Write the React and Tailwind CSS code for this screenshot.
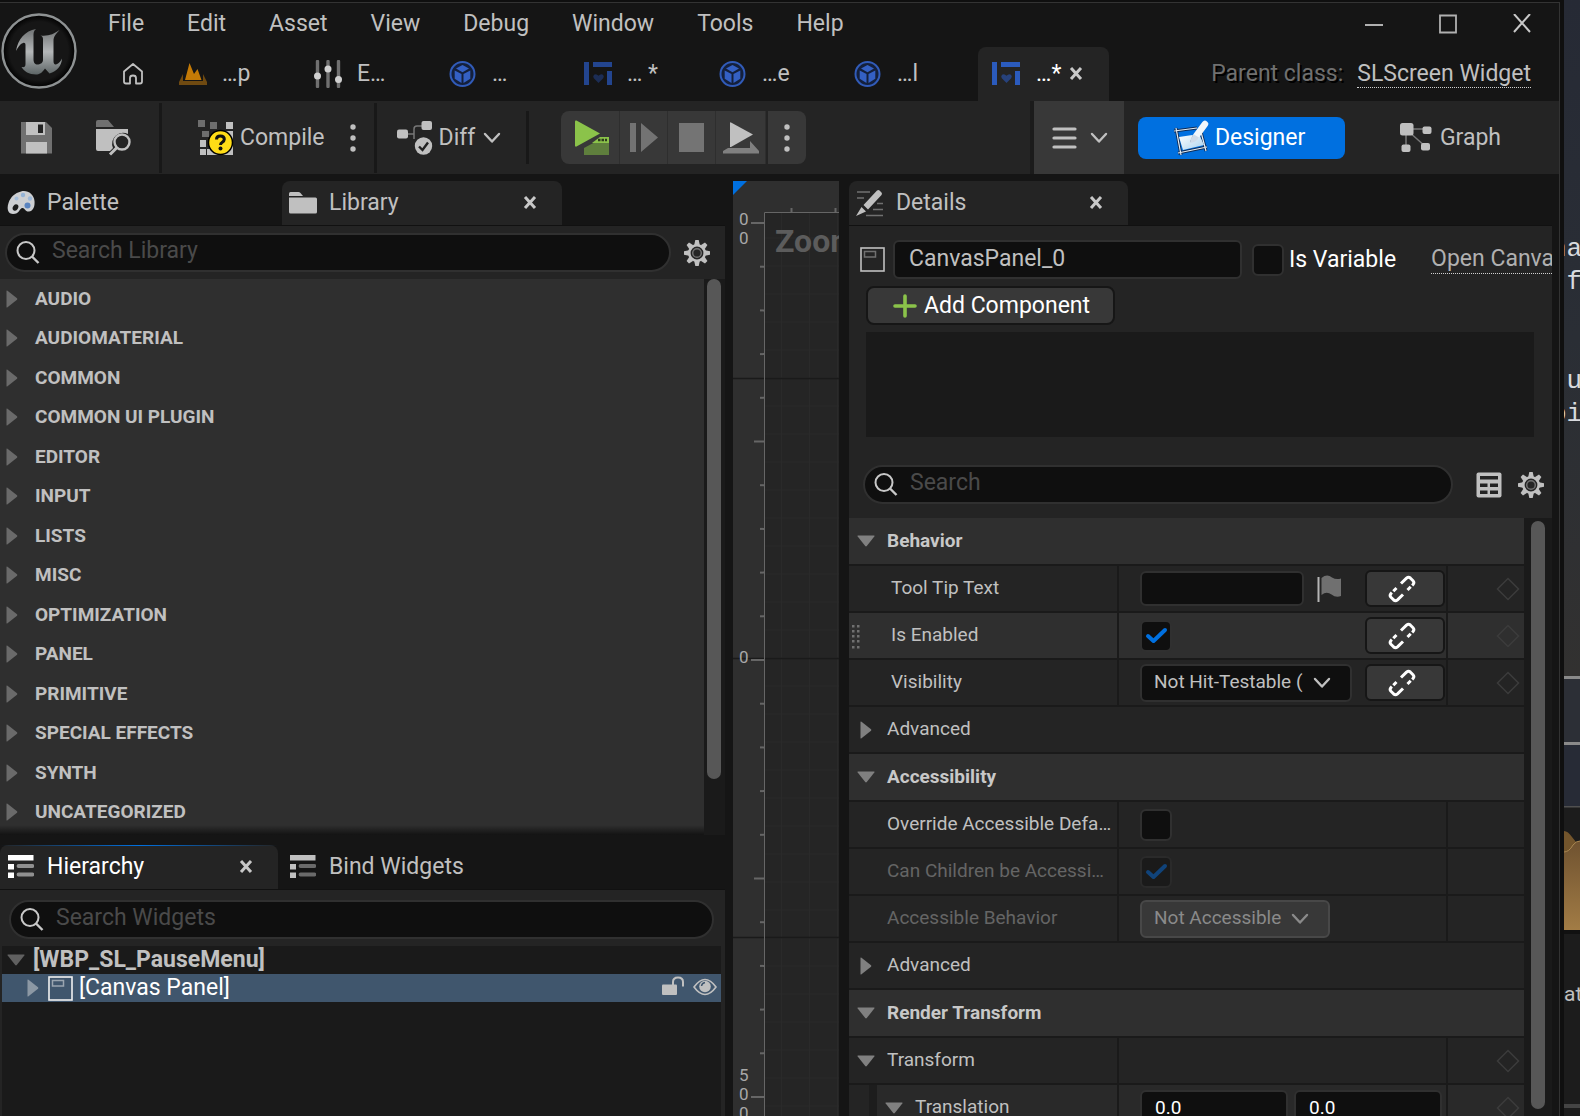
import React, { useState } from 'react'
import clsx from 'clsx'

const MENUS = ['File', 'Edit', 'Asset', 'View', 'Debug', 'Window', 'Tools', 'Help']

const LIBRARY = [
  'AUDIO', 'AUDIOMATERIAL', 'COMMON', 'COMMON UI PLUGIN', 'EDITOR', 'INPUT', 'LISTS',
  'MISC', 'OPTIMIZATION', 'PANEL', 'PRIMITIVE', 'SPECIAL EFFECTS', 'SYNTH', 'UNCATEGORIZED',
]

/* ---------- icons ---------- */

function UnrealLogo() {
  return (
    <svg viewBox="0 0 76 76" className="size-[76px]" aria-label="Unreal Engine">
      <defs>
        <linearGradient id="logoFill" x1="0" y1="0" x2="0" y2="1">
          <stop offset="0" stopColor="#6f7273" />
          <stop offset="0.5" stopColor="#b4b7b8" />
          <stop offset="1" stopColor="#5d6566" />
        </linearGradient>
        <radialGradient id="logoBg">
          <stop offset="0.8" stopColor="#161616" />
          <stop offset="1" stopColor="#000" />
        </radialGradient>
      </defs>
      <circle cx="38" cy="38" r="36.500" fill="url(#logoBg)" stroke="#8e9293" strokeWidth="2.400" />
      <path
        fill="url(#logoFill)"
        d="M15 38C17 26 24 18 35 16C32.500 18 32.500 20 32.500 23V46C32.500 50 34 51.500 36.500 51.500C39 51.500 42 50 42 47V26C42 24 41 23 39.500 22.500C47 23.500 53 21 58.500 17C55 21 52.500 23 52.500 28V48C52.500 50.500 53.500 52 55 51.500C58 50.500 60 48 61 45.500C60.500 53 56 58 48.500 60.500L44 55.500C41 60 38 61.500 35 61.500C28 61.500 23 58.500 20.500 54C23 54.500 24.500 54 24.500 51V32C24.500 30 23.500 29.500 22 30C19 31 17 34 15 38Z"
      />
    </svg>
  )
}

function HomeIcon() {
  return (
    <svg viewBox="0 0 22 24" className="w-[22px] h-6" fill="none" stroke="#c0c0c0" strokeWidth="1.800" strokeLinejoin="round">
      <path d="M2 9.500L11 2L20 9.500V19.500Q20 21.500 18 21.500H14V16Q14 13.500 11 13.500T8 16V21.500H4Q2 21.500 2 19.500Z" />
    </svg>
  )
}

function LevelIcon() {
  return (
    <svg viewBox="0 0 28 24" className="w-7 h-6">
      <path d="M6 18L10.500 1L15 12L18.500 7L22.500 18Z" fill="#c47a06" />
      <path d="M0 23V20L4 12V19H24V12L28 20V23Z" fill="#6f4a11" />
    </svg>
  )
}

function SlidersIcon() {
  return (
    <svg viewBox="0 0 28 28" className="size-7">
      <path d="M3.500 1.500V26.500M14 1.500V26.500M24.500 1.500V26.500" stroke="#707070" strokeWidth="3.400" strokeLinecap="round" />
      <g fill="#d0d0d0">
        <circle cx="3.500" cy="16" r="3.500" />
        <circle cx="14" cy="9" r="3.500" />
        <circle cx="24.500" cy="19.500" r="3.500" />
      </g>
    </svg>
  )
}

function BlueprintIcon() {
  return (
    <svg viewBox="0 0 28 28" className="size-7">
      <circle cx="13.500" cy="14" r="12" fill="#14203c" stroke="#315bb8" strokeWidth="2" />
      <g fill="#3460c4">
        <path d="M13.500 5L20 8.500L13.500 12.200L7 8.500Z" />
        <path d="M5.700 10.500L12.500 14V23L5.700 18.800Z" />
        <path d="M21.300 10.500L14.500 14V23L21.300 18.800Z" />
      </g>
    </svg>
  )
}

function WidgetIcon({ active }) {
  return (
    <svg viewBox="0 0 28 24" className="w-7 h-6">
      <path d="M0 0H5V23H0ZM9 0H28V5H9ZM23 9H28V23H23Z" fill={active ? '#2b5bbd' : '#23458f'} />
      <path d="M14.500 21L9.800 16.300Q8.500 14.500 10 12.800Q12.300 11.300 14.500 13.800Q16.700 11.300 19 12.800Q20.500 14.500 19.200 16.300Z" fill={active ? '#27427c' : '#1c2d55'} />
    </svg>
  )
}

function CloseIcon() {
  return (
    <svg viewBox="0 0 14 14" className="size-3.5" stroke="#c8c8c8" strokeWidth="3" fill="none">
      <path d="M2 1L12 12M12 1L2 12" />
    </svg>
  )
}

function Chevron({ className = 'text-[#c0c0c0]' }) {
  return (
    <svg viewBox="0 0 18 12" className={clsx('w-[18px] h-3', className)} fill="none" stroke="currentColor" strokeWidth="2.400" strokeLinecap="round" strokeLinejoin="round">
      <path d="M2 2L9 9.500L16 2" />
    </svg>
  )
}

function Dots() {
  return (
    <svg viewBox="0 0 6 30" className="w-1.5 h-[30px]" fill="#c0c0c0">
      <circle cx="3" cy="4" r="2.700" />
      <circle cx="3" cy="15" r="2.700" />
      <circle cx="3" cy="26" r="2.700" />
    </svg>
  )
}

function SaveIcon() {
  return (
    <svg viewBox="0 0 32 32" className="size-8">
      <path d="M0 0H25L31 6V31.500H0Z" fill="#707070" />
      <path d="M5 0H24V13H5ZM5 20H26V31.500H5Z" fill="#c0c0c0" />
      <path d="M17 2.500H22V11H17Z" fill="#242424" />
    </svg>
  )
}

function BrowseIcon() {
  return (
    <svg viewBox="0 0 36 36" className="size-9">
      <path d="M0 7V2Q0 0 2 0H12L18 7Z" fill="#707070" />
      <path d="M0 9H32V14A11 11 0 0 0 17 28L14 31H2Q0 31 0 29Z" fill="#c0c0c0" />
      <circle cx="26" cy="22" r="7.500" fill="none" stroke="#c0c0c0" strokeWidth="2.400" />
      <path d="M21 27.500L14 34.500" stroke="#c0c0c0" strokeWidth="3" />
    </svg>
  )
}

function CompileIcon() {
  return (
    <svg viewBox="0 0 36 36" className="size-9">
      <path d="M0 0H7V7H0ZM12 2H19V9H12ZM4 11H11V17H4Z" fill="#6e6e6e" />
      <path d="M28 2H35V9H28ZM20 11H27V17H20ZM28 11H35V35H2V29H8V35H9V29H16V20H28ZM2 20H8V27H2Z" fill="#c0c0c0" />
      <circle cx="22.500" cy="22.500" r="12" fill="#ffdc16" stroke="#000" strokeWidth="1.500" />
      <path d="M18.500 19.500Q18.500 16 22.300 16Q26.300 16 26.300 19.300Q26.300 21 24.300 22.200Q22.500 23.300 22.500 25" fill="none" stroke="#111" strokeWidth="3" />
      <circle cx="22.500" cy="28.500" r="2" fill="#111" />
    </svg>
  )
}

function DiffIcon() {
  return (
    <svg viewBox="0 0 36 34" className="w-9 h-[34px]">
      <path d="M8 13H17M25 5H20Q17 5 17 8V18" fill="none" stroke="#777" strokeWidth="1.500" />
      <rect x="0" y="8.500" width="11" height="9" rx="2" fill="#c0c0c0" />
      <rect x="24.500" y="0" width="10.500" height="9" rx="2" fill="#c0c0c0" />
      <circle cx="26.500" cy="25" r="8.700" fill="#c0c0c0" />
      <path d="M22 25.500L25.500 29L31 21.500" fill="none" stroke="#222" strokeWidth="2.400" />
    </svg>
  )
}

function PlayIcon() {
  return (
    <svg viewBox="0 0 35 36" className="w-[35px] h-9">
      <path d="M0 1.500Q0 0 1.500 .500L25 13.500L1.500 26.500Q0 27 0 25.500Z" fill="#8bc34a" />
      <path d="M9 28L22 21H34V35H9Z" fill="#5f7f3d" />
      <path d="M17 23L25 17H34V23Z" fill="#8bc34a" />
      <path d="M23 20H32" stroke="#2c3b1c" strokeWidth="2.600" strokeDasharray="2.500 1" />
    </svg>
  )
}

function LaunchIcon() {
  return (
    <svg viewBox="0 0 36 32" className="w-9 h-8">
      <path d="M5 26H27V19L36 29V31.500H0V29Z" fill="#808080" />
      <path d="M7 1Q7 0 8 .500L30 12.500L8 25H7Z" fill="#c0c0c0" />
    </svg>
  )
}

function DesignerIcon() {
  return (
    <svg viewBox="0 0 36 36" className="size-9">
      <defs>
        <linearGradient id="sheet" x1="0" y1="0" x2="1" y2="1">
          <stop offset="0" stopColor="#fff" />
          <stop offset="1" stopColor="#a9d2ee" />
        </linearGradient>
      </defs>
      <path d="M1 11L24 8M3 8L8 35M5 33L34 27M28 12L33 31" fill="none" stroke="#102c55" strokeWidth="3" />
      <path d="M1 11L24 8M3 8L8 35M5 33L34 27M28 12L33 31" fill="none" stroke="#e4eff8" strokeWidth="1.200" />
      <path d="M6 17L26 14L31 25L10 30Z" fill="url(#sheet)" />
      <path d="M17 22L20 15L24 18.500Z" fill="#244a76" />
      <path d="M23.500 15.500L32 4" stroke="#f0f6fb" strokeWidth="6.500" strokeLinecap="round" />
      <path d="M17 23Q17.500 17 21 14.500L26 17.500Q23 22.500 17 23Z" fill="#cfdbe8" />
    </svg>
  )
}

function GraphIcon() {
  return (
    <svg viewBox="0 0 32 30" className="w-8 h-[30px]">
      <path d="M7 6H27M6 8V26M8 8L26 24" stroke="#777" strokeWidth="1.500" />
      <g fill="#c0c0c0">
        <rect x="0" y="0" width="13.500" height="12.500" rx="2.500" />
        <rect x="22.500" y="3.500" width="9" height="7.500" rx="2" />
        <rect x="1.500" y="21.500" width="9" height="7.500" rx="2" />
        <rect x="21" y="20" width="9" height="7.500" rx="2" />
      </g>
    </svg>
  )
}

function PaletteIcon() {
  return (
    <svg viewBox="0 0 28 26" className="w-7 h-[26px]">
      <path d="M14 1.500C20 -.500 27 4 27.500 11C28 17 26 21 22 21.500C18 22 18 17.500 15 18C12.500 18.500 12.500 24 6 24C1 24 -.500 19 1.500 13C3.500 7 8 3 14 1.500Z" fill="#cdcfd2" />
      <ellipse cx="8.500" cy="17.500" rx="2.600" ry="3.400" transform="rotate(30 8.500 17.500)" fill="#1b1b1b" />
      <circle cx="9.500" cy="8.500" r="2" fill="#a3bdda" />
      <circle cx="16" cy="5" r="2.200" fill="#94b3d6" />
      <circle cx="23" cy="8.500" r="2.200" fill="#9cb8d8" />
      <circle cx="20.500" cy="15.500" r="3" fill="#5b84c0" />
    </svg>
  )
}

function FolderIcon() {
  return (
    <svg viewBox="0 0 28 22" className="w-7 h-[22px]" fill="#c0c0c0">
      <path d="M0 4V1.500Q0 0 1.500 0H9.500Q10.500 0 11.500 1L14 4Z" />
      <path d="M0 5.500H26.500Q28 5.500 28 7V20Q28 21.500 26.500 21.500H1.500Q0 21.500 0 20Z" />
    </svg>
  )
}

function ListIcon({ bright }) {
  return (
    <svg viewBox="0 0 26 24" className="w-[26px] h-6">
      <path d="M0 0H25.500V5.500H0ZM0 9H6V14.500H0ZM0 17.500H6V23H0Z" fill={bright ? '#fff' : '#c0c0c0'} />
      <path d="M10.500 11H24.500M10.500 19.500H24.500" stroke={bright ? '#909090' : '#6a6a6a'} strokeWidth="3.800" strokeLinecap="round" />
    </svg>
  )
}

function DetailsIcon() {
  return (
    <svg viewBox="0 0 28 28" className="size-7">
      <path d="M1 3H14M1 9H8M21 14.500H27M17 20.500H27M10 26.500H27" stroke="#707070" strokeWidth="1.600" />
      <path d="M21 1.500Q22.500 .500 23.500 1.500L25.500 3.500Q26.500 4.500 25.500 6L12 20.500L7.500 16ZM5.500 18L10 22.500L0 27Z" fill="#c0c0c0" />
    </svg>
  )
}

function SearchIcon() {
  return (
    <svg viewBox="0 0 24 24" className="size-6 shrink-0" fill="none" stroke="#c8c8c8" strokeWidth="2">
      <circle cx="10" cy="9.500" r="8.500" />
      <path d="M16 15.500L22.500 22" strokeWidth="2.400" />
    </svg>
  )
}

function GearIcon() {
  return (
    <svg viewBox="-13 -13 26 26" className="size-[26px]">
      <g fill="#c0c0c0">
        {[0, 45, 90, 135, 180, 225, 270, 315].map(a => (
          <path key={a} d="M-2.800 -8L-1.700 -13H1.700L2.800 -8Z" transform={`rotate(${a})`} />
        ))}
      </g>
      <circle r="7.700" fill="none" stroke="#c0c0c0" strokeWidth="2.600" />
      <circle r="4.300" fill="none" stroke="#707070" strokeWidth="1.500" />
    </svg>
  )
}

function TableIcon() {
  return (
    <svg viewBox="0 0 26 26" className="size-[26px]">
      <rect x="0.500" y="0.500" width="25" height="25" rx="2" fill="#c0c0c0" />
      <path d="M4 4H22V7.500H4ZM4 11.500H11.500V15H4ZM14 11.500H22V15H14ZM4 18.500H11.500V22H4ZM14 18.500H22V22H14Z" fill="#242424" />
    </svg>
  )
}

function PanelIcon({ bright }) {
  return (
    <svg viewBox="0 0 25 25" className="size-[25px] shrink-0" fill="none">
      <rect x="1" y="1" width="23" height="23" stroke={bright ? '#f0f0f0' : '#c0c0c0'} strokeWidth="1.600" />
      <rect x="4.500" y="4.500" width="11" height="5.500" stroke={bright ? '#9aa5b0' : '#707070'} strokeWidth="1.500" />
    </svg>
  )
}

function FlagIcon() {
  return (
    <svg viewBox="0 0 25 27" className="w-[25px] h-[27px]">
      <path d="M1.500 2V27" stroke="#b5b5b5" strokeWidth="2" />
      <path d="M4.500 3Q10 -1.500 15 2.500Q19 5 24 3.500V21Q19 23 14.500 19.500Q9.500 16 4.500 20Z" fill="#707070" />
    </svg>
  )
}

function LinkIcon() {
  return (
    <svg viewBox="0 0 28 28" className="size-7" fill="none" stroke="#fff" strokeWidth="3">
      <path d="M13 8.500L18.500 3.200Q20.500 1.500 22.300 3L25 5.700Q26.700 7.500 25 9.500L19.500 15" strokeDasharray="21 2 20" />
      <path d="M15 19.500L9.500 24.800Q7.500 26.500 5.700 25L3 22.300Q1.300 20.500 3 18.500L8.500 13" strokeDasharray="21 2 20" />
    </svg>
  )
}

function DiamondIcon() {
  return (
    <svg viewBox="0 0 24 24" className="size-6" fill="none" stroke="#3c3c3c" strokeWidth="1.500">
      <path d="M12 1.500L22.500 12L12 22.500L1.500 12Z" />
    </svg>
  )
}

function Arrow({ open, className = 'fill-[#808080]' }) {
  return (
    <svg viewBox="0 0 18 18" className={clsx('size-[18px] shrink-0', className)}>
      <path d={open ? 'M1 3.500H17Q18 3.500 17.300 4.500L9.800 14Q9 14.800 8.200 14L.700 4.500Q0 3.500 1 3.500Z' : 'M3.500 1Q3.500 0 4.500 .700L14 8.200Q14.800 9 14 9.800L4.500 17.300Q3.500 18 3.500 17Z'} />
    </svg>
  )
}

/* ---------- shared controls ---------- */

function SearchBox({ placeholder }) {
  return (
    <label className="flex flex-1 min-w-0 h-[39px] items-center gap-3 rounded-full border-2 border-[#303030] bg-[#0f0f0f] pl-[9px] pr-5">
      <SearchIcon />
      <input
        type="search"
        aria-label={placeholder}
        placeholder={placeholder}
        className="flex-1 min-w-0 bg-transparent pb-[3px] text-[23px] leading-7 text-[#c0c0c0] placeholder-[#4a4a4a] outline-none"
      />
    </label>
  )
}

function Checkbox({ id, label, checked = false, disabled }) {
  const [on, setOn] = useState(checked)
  return (
    <span className="relative block size-8 shrink-0">
      <input
        id={id}
        type="checkbox"
        aria-label={label}
        checked={on}
        disabled={disabled}
        onChange={() => setOn(!on)}
        className={clsx('block size-8 appearance-none rounded-md border-2', disabled ? 'border-[#2a2a2a] bg-[#1a1a1a]' : 'border-[#303030] bg-[#0f0f0f]')}
      />
      {on && (
        <svg viewBox="0 0 32 32" className="pointer-events-none absolute inset-0 size-8" fill="none" stroke={disabled ? '#10437a' : '#0070e0'} strokeWidth="4" strokeLinecap="round" strokeLinejoin="round">
          <path d="M8 16L13.500 21L25 10" />
        </svg>
      )}
    </span>
  )
}

function Dropdown({ label, value, disabled, className }) {
  return (
    <span className={clsx('relative block', className)}>
      <select
        aria-label={label}
        disabled={disabled}
        className={clsx(
          'block h-[38px] w-full appearance-none rounded-md border-2 pl-3 pr-10 text-[19px] opacity-100 outline-none',
          disabled ? 'border-[#484848] bg-[#383838] text-[#8a8a8a]' : 'border-[#303030] bg-[#0f0f0f] text-[#c0c0c0]'
        )}
      >
        <option>{value}</option>
      </select>
      <span className="pointer-events-none absolute right-[21px] top-[13px]">
        <Chevron className={disabled ? 'text-[#8a8a8a]' : 'text-[#c0c0c0]'} />
      </span>
    </span>
  )
}

function PanelTab({ icon, label, active, focused, className }) {
  return (
    <div className={clsx('relative flex h-11 items-center pl-[7px]', active && 'rounded-t-lg bg-[#242424]', className)}>
      {focused && <span className="absolute inset-x-0 top-0 h-px bg-linear-to-r from-transparent via-[#0070e0] to-transparent" />}
      <button className="flex items-center gap-3">
        <span className="flex w-7 justify-center">{icon}</span>
        <span className={clsx('pb-px text-[23px] leading-7', focused ? 'text-white' : 'text-[#c0c0c0]')}>{label}</span>
      </button>
      {active && (
        <button aria-label={`Close ${label}`} className="ml-auto mr-[25px]">
          <CloseIcon />
        </button>
      )}
    </div>
  )
}

/* ---------- header ---------- */

function DocTab({ icon, text, active }) {
  if (active) {
    return (
      <div className="ml-0.5 flex h-[54px] w-[131px] items-center rounded-t-lg bg-[#242424] pl-3.5">
        <button className="flex items-center gap-4 text-white">{icon}<span>{text}</span></button>
        <button aria-label="Close tab" className="ml-2"><CloseIcon /></button>
      </div>
    )
  }
  return (
    <button className="flex h-[54px] w-[135px] items-center gap-[15px] pl-[13px]">
      {icon}
      <span>{text}</span>
    </button>
  )
}

function TitleBar() {
  return (
    <header className="flex h-[98px] shrink-0 bg-[#151515] text-[23px] leading-7 text-[#c0c0c0]">
      <div className="w-[78px] shrink-0 pl-px pt-2.5"><UnrealLogo /></div>
      <div className="flex min-w-0 flex-1 flex-col">
        <div className="flex h-[42px] items-center">
          <nav className="flex gap-[43px] pl-[30px]">
            {MENUS.map(m => <button key={m}>{m}</button>)}
          </nav>
          <div className="ml-auto flex gap-[54px] pr-[27px]">
            <button aria-label="Minimize">
              <svg viewBox="0 0 20 20" className="size-5" stroke="#b0b0b0" strokeWidth="2"><path d="M1 11H19" /></svg>
            </button>
            <button aria-label="Maximize">
              <svg viewBox="0 0 20 20" className="size-5" fill="none" stroke="#b0b0b0" strokeWidth="1.800"><path d="M2 1.500H18V18.500H2Z" /></svg>
            </button>
            <button aria-label="Close">
              <svg viewBox="0 0 20 20" className="size-5" stroke="#c8c8c8" strokeWidth="2"><path d="M2 0L18 18M18 0L2 18" /></svg>
            </button>
          </div>
        </div>
        <div className="flex h-14 items-end">
          <button aria-label="Home" className="flex h-[54px] w-[88px] items-center pl-11"><HomeIcon /></button>
          <DocTab icon={<LevelIcon />} text="…p" />
          <DocTab icon={<SlidersIcon />} text="E…" />
          <DocTab icon={<BlueprintIcon />} text="…" />
          <DocTab icon={<WidgetIcon />} text="… *" />
          <DocTab icon={<BlueprintIcon />} text="…e" />
          <DocTab icon={<BlueprintIcon />} text="…l" />
          <DocTab icon={<WidgetIcon active />} text="…*" active />
          <p className="ml-auto flex h-[54px] items-center gap-3.5 whitespace-nowrap pr-7">
            <span className="text-[#707070] [text-shadow:2px_2px_0_#000]">Parent class:</span>
            <a href="#parent" className="border-b border-dotted border-[#d0d0d0] leading-[26px]">SLScreen Widget</a>
          </p>
        </div>
      </div>
    </header>
  )
}

function Separator({ short }) {
  return <span className={clsx('w-[3px] shrink-0 bg-[#181818]', short ? 'h-[53px]' : 'h-[70px]')} />
}

function Toolbar() {
  return (
    <div className="flex h-[73px] shrink-0 items-center bg-[#242424] text-[23px] leading-7 text-[#c0c0c0]">
      <button aria-label="Save" className="ml-[21px]"><SaveIcon /></button>
      <button aria-label="Browse" className="ml-[43px] mr-[27px]"><BrowseIcon /></button>
      <Separator />
      <button className="ml-9 flex items-center gap-1.5"><CompileIcon /><span>Compile</span></button>
      <button aria-label="Compile options" className="ml-[25px] mr-[18px]"><Dots /></button>
      <Separator />
      <button className="ml-5 mr-[25px] flex items-center gap-1.5">
        <DiffIcon />
        <span>Diff</span>
        <span className="ml-0.5"><Chevron /></span>
      </button>
      <Separator short />
      <div className="ml-8 flex h-[53px] overflow-hidden rounded-lg bg-[#383838] divide-x divide-[#2e2e2e]">
        <button aria-label="Play" className="flex w-[59px] items-center pl-3.5"><PlayIcon /></button>
        <button aria-label="Skip" className="flex w-12 items-center justify-center">
          <svg viewBox="0 0 28 30" className="w-7 h-[30px]" fill="#737373"><path d="M0 0H6V29H0ZM11 0L28 14.500L11 29Z" /></svg>
        </button>
        <button aria-label="Stop" className="flex w-12 items-center justify-center">
          <span className="h-[29px] w-[25px] bg-[#747474]" />
        </button>
        <button aria-label="Launch" className="flex w-[50px] items-center justify-center"><LaunchIcon /></button>
        <button aria-label="Play options" className="flex w-10 items-center justify-center border-l-2 border-[#242424]"><Dots /></button>
      </div>
      <div className="ml-auto flex h-full items-center">
        <button aria-label="View options" className="flex h-full w-[94px] items-center gap-[13px] border-l-4 border-[#1b1b1b] bg-[#383838] pl-[18px]">
          <svg viewBox="0 0 25 24" className="w-[25px] h-6" stroke="#c0c0c0" strokeWidth="3.200" strokeLinecap="round"><path d="M2 3H23M2 12H23M2 21H23" /></svg>
          <Chevron />
        </button>
        <button className="ml-3.5 flex h-[42px] w-[207px] items-center gap-1.5 rounded-lg bg-[#0070e0] pl-[35px] text-white">
          <DesignerIcon /><span>Designer</span>
        </button>
        <button className="ml-[55px] mr-[58px] flex items-center gap-2"><GraphIcon /><span>Graph</span></button>
      </div>
    </div>
  )
}

/* ---------- left side ---------- */

function LibraryPanel() {
  return (
    <section className="flex min-h-0 flex-[654] flex-col">
      <div className="flex border-b border-[#111]">
        <PanelTab icon={<PaletteIcon />} label="Palette" className="w-[282px]" />
        <PanelTab icon={<FolderIcon />} label="Library" active className="w-[280px]" />
      </div>
      <div className="flex h-[53px] shrink-0 items-center gap-[13px] bg-[#242424] pl-[5px] pr-[15px]">
        <SearchBox placeholder="Search Library" />
        <button aria-label="Library settings"><GearIcon /></button>
      </div>
      <div className="flex min-h-0 flex-1 bg-[#1a1a1a]">
        <ul className="relative flex flex-1 flex-col bg-[#2f2f2f] pb-[3px]">
          {LIBRARY.map(name => (
            <li key={name} className="flex flex-1 items-center gap-3.5 pl-[3px] text-[19px] font-bold leading-6 text-[#c0c0c0]">
              <Arrow className="fill-[#6a6a6a]" />
              {name}
            </li>
          ))}
          <li aria-hidden="true" className="absolute inset-x-0 bottom-0 h-2.5 bg-linear-to-t from-black/60 to-transparent" />
        </ul>
        <div className="w-[21px] pl-[3px]"><div className="h-[90%] w-3.5 rounded-full bg-[#575757]" /></div>
      </div>
    </section>
  )
}

function HierarchyPanel() {
  return (
    <section className="flex min-h-0 flex-[271] flex-col">
      <div className="flex border-b border-[#111]">
        <PanelTab icon={<ListIcon bright />} label="Hierarchy" active focused className="w-[278px]" />
        <PanelTab icon={<ListIcon />} label="Bind Widgets" className="ml-1" />
      </div>
      <div className="flex min-h-0 flex-1 flex-col bg-[#242424] pl-0.5 pr-1 pt-2.5">
        <div className="mb-[7px] flex pl-[7px] pr-[7px]"><SearchBox placeholder="Search Widgets" /></div>
        <ul className="flex-1 bg-[#1a1a1a] text-[23px] leading-7">
          <li className="flex h-7 items-center gap-2 pl-[5px] font-bold text-[#c0c0c0]">
            <Arrow open className="fill-[#606060]" />
            <span>[WBP_SL_PauseMenu]</span>
          </li>
          <li className="flex h-7 items-center bg-[#40566d] pl-[22px] pr-1 text-white">
            <Arrow className="fill-[#8c98a4]" />
            <span className="ml-1.5"><PanelIcon bright /></span>
            <span className="ml-1.5">[Canvas Panel]</span>
            <button aria-label="Toggle lock" className="ml-auto pb-1">
              <svg viewBox="0 0 22 20" className="w-[22px] h-5">
                <rect x="0" y="8.500" width="15" height="10.500" rx="1" fill="#c0c0c0" />
                <path d="M11 9V6Q11 1.500 16 1.500T21 6V10.500" fill="none" stroke="#c0c0c0" strokeWidth="2" />
              </svg>
            </button>
            <button aria-label="Toggle visibility" className="ml-[9px] pb-0.5">
              <svg viewBox="0 0 24 18" className="w-6 h-[18px]">
                <path d="M1 9Q12 -6 23 9Q12 24 1 9Z" fill="none" stroke="#c0c0c0" strokeWidth="1.600" />
                <circle cx="12" cy="8.500" r="5.800" fill="#c0c0c0" />
                <path d="M8.500 8Q9 5 12 4.500" fill="none" stroke="#40566d" strokeWidth="1.500" />
              </svg>
            </button>
          </li>
        </ul>
      </div>
    </section>
  )
}

/* ---------- canvas with rulers ---------- */

function Canvas() {
  const rows = Array.from({ length: 33 }, (_, i) => 29 + i * 28)
  const ticks = Array.from({ length: 21 }, (_, i) => i)
  const labels = [['0', 44], ['0', 63], ['0', 482], ['5', 900], ['0', 919], ['0', 938]]
  return (
    <section className="relative mr-0.5 min-w-0 overflow-hidden bg-[#252525]">
      <svg className="absolute inset-0 h-full w-full" fontFamily="Roboto, sans-serif">
        {rows.map(y => <path key={y} d={`M31 ${y}H400`} stroke="#2a2a2a" strokeWidth="1" />)}
        <path d="M48.500 31V2000M76.500 31V2000M104.500 31V2000" stroke="#2a2a2a" strokeWidth="1" />
        <path d="M0 0H400V31H31V2000H0Z" fill="#2f2f2f" />
        <path d="M0 197.500H400M0 477.500H400M0 756.500H400" stroke="#1a1a1a" strokeWidth="1.500" />
        <path d="M31.500 2000V31.500H400" fill="none" stroke="#666" strokeWidth="1" />
        {ticks.map(i => {
          const len = i % 10 === 0 ? 13 : i % 5 === 0 ? 10 : 4
          return <path key={i} d={`M${31 - len} ${42 + i * 43.7}H31`} stroke="#666" strokeWidth="2" />
        })}
        <path d="M58.500 27V31M102.500 27V31" stroke="#666" strokeWidth="2" />
        <path d="M0 0H14L0 14Z" fill="#0070e0" />
        {labels.map(([t, y], i) => <text key={i} x="6" y={y} fontSize="17" fill="#a8a8a8">{t}</text>)}
      </svg>
      <p className="relative pl-[42px] pt-10 text-[32px] font-bold leading-10 text-[#5c5c5c]">Zoom</p>
    </section>
  )
}

/* ---------- details ---------- */

function Category({ name }) {
  return (
    <h3 className="flex h-12 items-center gap-3 border-b-2 border-[#1a1a1a] bg-[#2f2f2f] pl-2 text-[19px] font-bold text-[#c8c8c8]">
      <Arrow open />{name}
    </h3>
  )
}

function Advanced() {
  return (
    <button className="flex h-[47px] w-full items-center gap-3 border-b-2 border-[#1a1a1a] pl-2 text-[19px] text-[#c0c0c0]">
      <Arrow />Advanced
    </button>
  )
}

function Row({ name, children, hovered, dim, nested, expandable, binding, keyable }) {
  return (
    <div className={clsx('grid h-[47px] grid-cols-[minmax(0,270fr)_minmax(0,329fr)_76px] border-b-2 border-[#1a1a1a] text-[19px]', hovered && 'bg-[#2f2f2f]', nested && 'bg-[#292929]')}>
      <div className={clsx('flex min-w-0 items-center border-r-2 border-[#1a1a1a]', dim ? 'text-[#656565]' : 'text-[#c0c0c0]')}>
        {nested && <span className="h-full w-7 shrink-0 border-r-8 border-[#1d1d1d] bg-[#242424]" />}
        {hovered && (
          <svg viewBox="0 0 8 26" className="ml-[3px] h-[26px] w-2" fill="#707070">
            {[2, 7, 12, 17, 23].map(y => <path key={y} d={`M0 ${y}h2.500v2.500h-2.500ZM5 ${y}h2.500v2.500h-2.500Z`} />)}
          </svg>
        )}
        {expandable && <span className="pl-2"><Arrow open /></span>}
        <span className={clsx('truncate pr-[3px]', expandable ? 'pl-3' : hovered ? 'pl-[31px]' : keyable ? 'pl-[42px]' : 'pl-[38px]')}>{name}</span>
      </div>
      <div className="flex min-w-0 items-center border-r-2 border-[#1a1a1a] pl-[21px]">
        {children}
        {binding && (
          <button aria-label={`Bind ${name}`} className="ml-auto mr-px flex h-[37px] w-20 shrink-0 items-center rounded-md border-2 border-[#161616] bg-[#383838] pl-[21px]">
            <LinkIcon />
          </button>
        )}
      </div>
      <div className="flex items-center justify-end pr-1">{keyable && <DiamondIcon />}</div>
    </div>
  )
}

const fieldClass = 'min-w-0 rounded-md border-2 border-[#303030] bg-[#0f0f0f] outline-none'

function DetailsPanel() {
  return (
    <section className="flex min-h-0 min-w-0 flex-col">
      <div className="flex border-b border-[#111]">
        <PanelTab icon={<DetailsIcon />} label="Details" active className="w-[279px]" />
      </div>
      <div className="flex min-h-0 flex-1 flex-col bg-[#242424]">
        <div className="flex items-center overflow-hidden whitespace-nowrap pl-[11px] pt-3.5 text-[23px] leading-7">
          <PanelIcon />
          <input aria-label="Widget name" defaultValue="CanvasPanel_0" className={clsx(fieldClass, 'ml-2 h-[39px] w-[349px] shrink-0 pb-[3px] pl-3.5 text-[#c0c0c0]')} />
          <span className="ml-2.5"><Checkbox id="is-variable" label="Is Variable" /></span>
          <label htmlFor="is-variable" className="ml-[5px] text-white">Is Variable</label>
          <a href="#open" className="ml-[35px] border-b border-dotted border-[#d0d0d0] leading-7 text-[#b0b0b0]">Open Canvas</a>
        </div>
        <div className="pl-[17px] pt-[7px]">
          <button className="flex h-[39px] w-[249px] items-center gap-[7px] rounded-lg border-2 border-[#161616] bg-[#383838] pl-[25px] text-[23px] leading-7 text-white">
            <svg viewBox="0 0 24 24" className="size-6" stroke="#8bc34a" strokeWidth="3.600" strokeLinecap="round"><path d="M12 2V22M2 12H22" /></svg>
            <span>Add Component</span>
          </button>
        </div>
        <div className="ml-[17px] mr-[18px] mt-[7px] h-[105px] shrink-0 bg-[#1a1a1a]" />
        <div className="mb-3.5 mt-7 flex items-center pl-3.5 pr-2">
          <SearchBox placeholder="Search" />
          <button aria-label="Property matrix" className="ml-[23px]"><TableIcon /></button>
          <button aria-label="Details settings" className="ml-4"><GearIcon /></button>
        </div>
        <div className="flex min-h-0 flex-1 overflow-hidden bg-[#1a1a1a]">
          <div className="h-fit min-w-0 flex-1 bg-[#242424]">
            <Category name="Behavior" />
            <Row name="Tool Tip Text" binding keyable>
              <input aria-label="Tool Tip Text" className={clsx(fieldClass, 'h-[35px] w-[164px]')} />
              <button aria-label="Localization" className="ml-[13px]"><FlagIcon /></button>
            </Row>
            <Row name="Is Enabled" hovered binding keyable>
              <Checkbox label="Is Enabled" checked />
            </Row>
            <Row name="Visibility" binding keyable>
              <Dropdown label="Visibility" value="Not Hit-Testable (" className="w-[212px]" />
            </Row>
            <Advanced />
            <Category name="Accessibility" />
            <Row name="Override Accessible Defaults"><Checkbox label="Override Accessible Defaults" /></Row>
            <Row name="Can Children be Accessible" dim><Checkbox label="Can Children be Accessible" checked disabled /></Row>
            <Row name="Accessible Behavior" dim>
              <Dropdown label="Accessible Behavior" value="Not Accessible" disabled className="w-[190px]" />
            </Row>
            <Advanced />
            <Category name="Render Transform" />
            <Row name="Transform" expandable keyable />
            <Row name="Translation" nested expandable keyable>
              <input aria-label="Translation X" defaultValue="0.0" className={clsx(fieldClass, 'mr-1.5 h-[35px] w-[148px] pl-[13px] text-white')} />
              <input aria-label="Translation Y" defaultValue="0.0" className={clsx(fieldClass, 'h-[35px] w-[148px] pl-[13px] text-white')} />
            </Row>
          </div>
          <div className="w-7 shrink-0 pb-[7px] pl-[7px] pt-[3px]"><div className="h-full w-3.5 rounded-full bg-[#575757]" /></div>
        </div>
      </div>
    </section>
  )
}

/* Sliver of the windows lying behind the editor */
function Backdrop() {
  return (
    <aside className="flex w-4 shrink-0 flex-col overflow-hidden bg-[#1c1c1c]">
      <div className="h-[676px] shrink-0 bg-linear-to-b from-[#262a35] via-[#2a2e35] to-[#323130] pt-[233px]">
        <pre className="-ml-[13px] font-['Liberation_Mono',monospace] text-[26px] leading-[33px] text-[#d8dade]">{'na\n f\n\n\n u\noi\n\n\n:'}</pre>
      </div>
      <div className="h-[66px] shrink-0 border-t-3 border-[#8a8a8a] bg-[#2c2f36]" />
      <div className="h-16 shrink-0 border-t-3 border-[#8a8a8a] bg-[#272b36]" />
      <svg viewBox="0 0 16 128" className="h-32 w-4 shrink-0">
        <defs>
          <linearGradient id="gold" x1="0" y1="0" x2="0" y2="1">
            <stop offset="0" stopColor="#6f5230" />
            <stop offset="1" stopColor="#a27c45" />
          </linearGradient>
        </defs>
        <path d="M0 0H16V1.500H0Z" fill="#505050" />
        <path d="M0 25Q4 25 8 31L12 36V48H0Z" fill="#73552c" />
        <path d="M0 46Q5 46 9 39Q12 35 16 35V124H0Z" fill="url(#gold)" />
        <path d="M0 46Q5 46 9 39Q12 35 16 35" fill="none" stroke="#a98752" />
        <path d="M0 124H16V128H0Z" fill="#111" />
      </svg>
      <p className="pt-[46px] text-[21px] leading-7 text-[#c0c0c0]">at</p>
      <div className="mb-2 mt-auto h-1 shrink-0 bg-[#444]" />
    </aside>
  )
}

export default function App() {
  return (
    <div className="flex h-screen overflow-hidden bg-[#0f0f0f] font-[Roboto,sans-serif]">
      <div className="mr-1 mt-0.5 flex min-w-0 flex-1 flex-col border-r border-t border-[#333] bg-[#151515]">
        <TitleBar />
        <Toolbar />
        <main className="grid min-h-0 flex-1 grid-cols-[minmax(0,725fr)_minmax(0,108fr)_minmax(0,703fr)] gap-2 pr-[7px] pt-[7px]">
          <div className="flex min-h-0 flex-col gap-2.5">
            <LibraryPanel />
            <HierarchyPanel />
          </div>
          <Canvas />
          <DetailsPanel />
        </main>
      </div>
      <Backdrop />
    </div>
  )
}
